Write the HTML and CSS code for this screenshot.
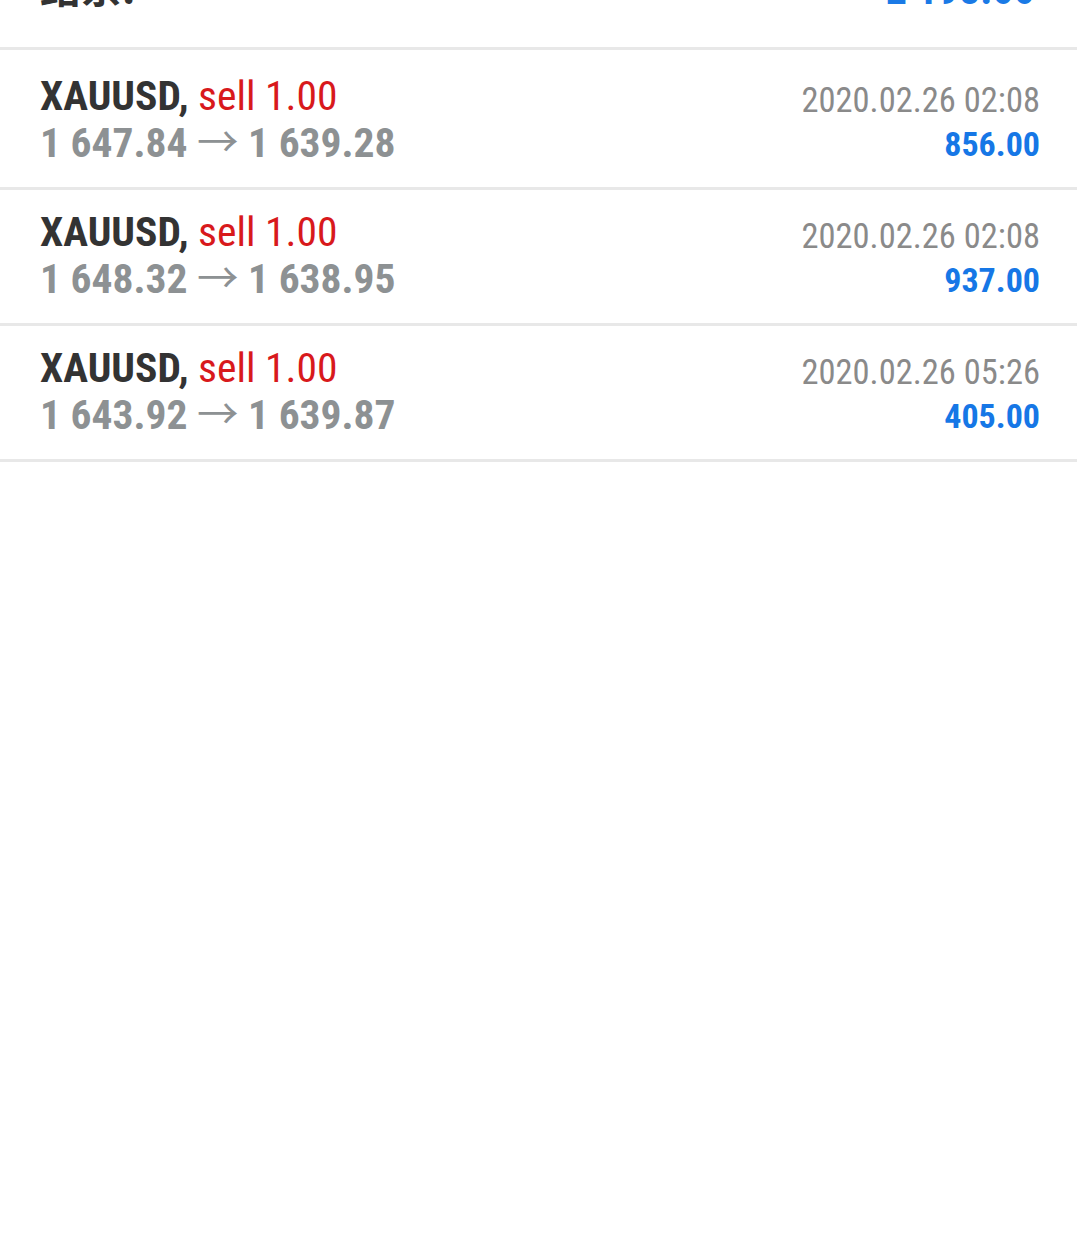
FILE: index.html
```html
<!DOCTYPE html>
<html lang="zh">
<head>
<meta charset="utf-8">
<title>History</title>
<link rel="stylesheet" href="styles.css">
</head>
<body>
<div class="page">
  <div class="summary">
    <span class="summary-label">结余:</span>
    <span class="summary-value">2 198.00</span>
  </div>
  <ul class="deals">
    <li class="deal">
      <div class="deal-left">
        <div class="deal-title"><span class="symbol">XAUUSD,</span> <span class="side">sell 1.00</span></div>
        <div class="deal-prices">1 647.84 <span class="arrow">→</span> 1 639.28</div>
      </div>
      <div class="deal-right">
        <div class="deal-time">2020.02.26 02:08</div>
        <div class="deal-profit">856.00</div>
      </div>
    </li>
    <li class="deal">
      <div class="deal-left">
        <div class="deal-title"><span class="symbol">XAUUSD,</span> <span class="side">sell 1.00</span></div>
        <div class="deal-prices">1 648.32 <span class="arrow">→</span> 1 638.95</div>
      </div>
      <div class="deal-right">
        <div class="deal-time">2020.02.26 02:08</div>
        <div class="deal-profit">937.00</div>
      </div>
    </li>
    <li class="deal">
      <div class="deal-left">
        <div class="deal-title"><span class="symbol">XAUUSD,</span> <span class="side">sell 1.00</span></div>
        <div class="deal-prices">1 643.92 <span class="arrow">→</span> 1 639.87</div>
      </div>
      <div class="deal-right">
        <div class="deal-time">2020.02.26 05:26</div>
        <div class="deal-profit">405.00</div>
      </div>
    </li>
  </ul>
</div>
</body>
</html>
```

FILE: styles.css
```css
html, body {
  margin: 0;
  padding: 0;
  background: #ffffff;
}

body {
  font-family: "Roboto Condensed", Roboto, "Noto Sans CJK SC", sans-serif;
  font-stretch: 75%;
  overflow: hidden;
}

.page {
  width: 1077px;
}

.summary {
  display: flex;
  justify-content: space-between;
  align-items: flex-start;
  height: 90px;
  box-sizing: border-box;
  margin-top: -40px;
  padding: 3px 42px 0 40px;
  border-bottom: 3px solid #e8e8e8;
  line-height: 44px;
}

.summary-label {
  font-family: "Noto Sans CJK SC", sans-serif;
  font-size: 41px;
  font-weight: 700;
  color: #333333;
}

.summary-value {
  margin-top: 5px;
  font-size: 42px;
  font-weight: 700;
  color: #1a7ae6;
}

.deals {
  list-style: none;
  margin: 0;
  padding: 0;
}

.deal {
  display: flex;
  justify-content: space-between;
  align-items: flex-start;
  height: 136px;
  box-sizing: border-box;
  padding: 18px 37px 0 40px;
  border-bottom: 3px solid #e8e8e8;
}

.deal:first-child {
  height: 140px;
  padding-top: 22px;
}

.deal-left {
  display: flex;
  flex-direction: column;
}

.deal-title {
  font-size: 41.5px;
  line-height: 47px;
  white-space: nowrap;
}

.symbol {
  font-weight: 700;
  color: #333333;
}

.side {
  color: #d8191c;
}

.deal-prices {
  font-size: 41.5px;
  line-height: 47px;
  font-weight: 700;
  color: #8d9193;
  white-space: nowrap;
}

.arrow {
  font-weight: 400;
}

.deal-right {
  display: flex;
  flex-direction: column;
  align-items: flex-end;
  padding-top: 6px;
}

.deal-time {
  font-size: 34.5px;
  line-height: 44px;
  color: #8a8a8a;
  white-space: nowrap;
}

.deal-profit {
  font-size: 34px;
  line-height: 44px;
  font-weight: 700;
  color: #1677e6;
}
```
